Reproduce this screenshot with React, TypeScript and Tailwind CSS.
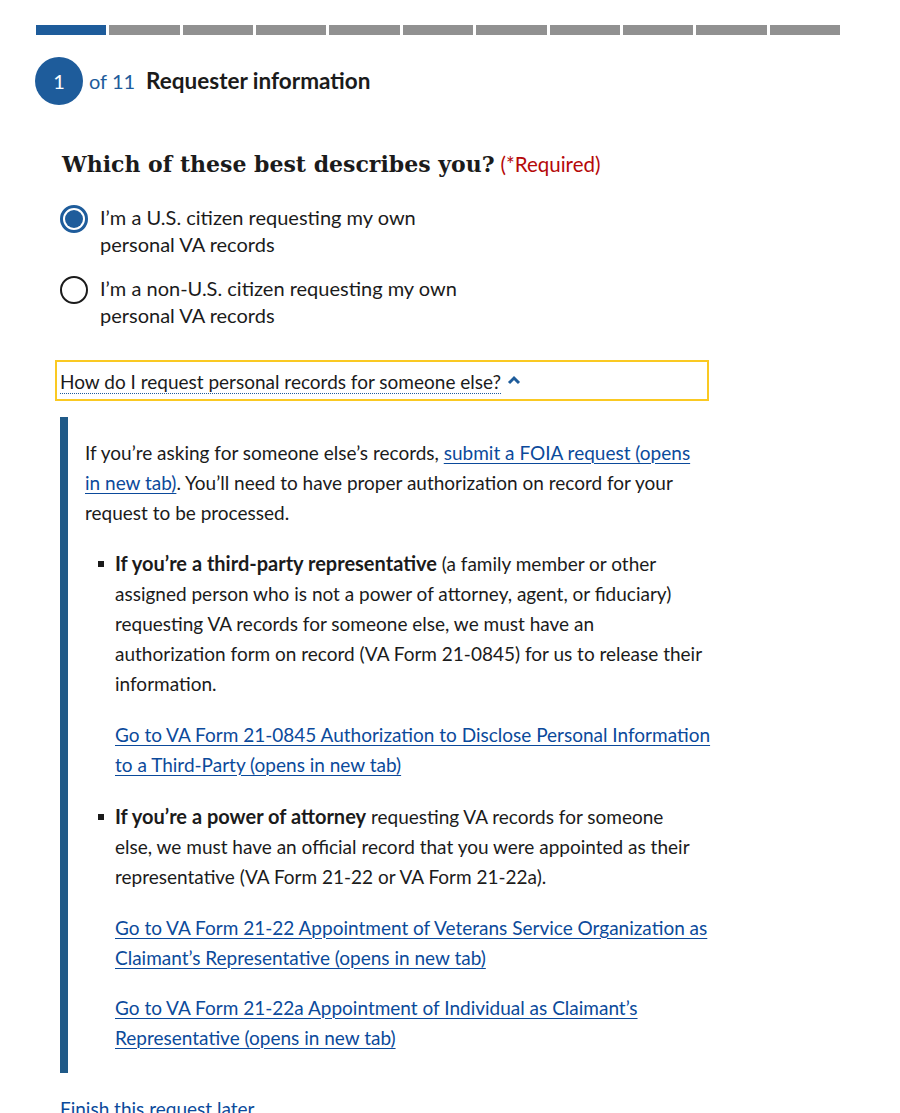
import React from "react";

const body = { fontFamily: '"Source Sans Pro", Lato, "Liberation Sans", sans-serif' };

function Progress() {
  const segs = Array.from({ length: 11 }, (_, i) => i);
  return (
    <div className="flex gap-[3px] w-[804px] ml-[36px]">
      {segs.map((i) => (
        <div
          key={i}
          className={`flex-1 h-[10px] ${i === 0 ? "bg-[#1e5c9b]" : "bg-[#919191]"}`}
        />
      ))}
    </div>
  );
}

function Radio({ checked, children }: { checked?: boolean; children: React.ReactNode }) {
  return (
    <label className="flex items-start gap-[12px]">
      <span
        className={`mt-[1px] shrink-0 w-[28px] h-[28px] rounded-full flex items-center justify-center ${
          checked ? "border-[3px] border-[#1e5c9b]" : "border-2 border-[#1b1b1b]"
        }`}
      >
        {checked && <span className="w-[18px] h-[18px] rounded-full bg-[#1e5c9b]" />}
      </span>
      <span className="text-[20px] leading-[27px] text-[#1b1b1b] w-[380px]">{children}</span>
    </label>
  );
}

function A({ children }: { children: React.ReactNode }) {
  return (
    <a href="#" className="text-[#0b4a9b] underline underline-offset-[3px] decoration-1">
      {children}
    </a>
  );
}

function Bullet() {
  return <span className="absolute -left-[17px] top-[13px] w-[6px] h-[6px] bg-[#1b1b1b]" />;
}

export default function App() {
  return (
    <div className="bg-white min-h-[1113px] pt-[25px] text-[#1b1b1b]" style={body}>
      <Progress />

      <div className="flex items-center mt-[22px] ml-[35px]">
        <div className="w-[48px] h-[48px] rounded-full bg-[#1e5c9b] text-white text-[20px] flex items-center justify-center">
          1
        </div>
        <span className="ml-[6px] text-[20px] text-[#1e5c9b]">of 11</span>
        <span className="ml-[11px] text-[22.5px] font-bold">Requester information</span>
      </div>

      <div className="ml-[60px] w-[680px]">
        <h2 className="mt-[44px] flex items-baseline gap-[6px]">
          <span
            className="text-[22px] font-bold leading-[30px] ml-[2px]"
            style={{ fontFamily: '"DejaVu Serif", "Liberation Serif", serif' }}
          >
            Which of these best describes you?
          </span>
          <span className="text-[20.5px] text-[#b50909]">(*Required)</span>
        </h2>

        <div className="mt-[24px] flex flex-col gap-[17px]">
          <Radio checked>I’m a U.S. citizen requesting my own personal VA records</Radio>
          <Radio>I’m a non-U.S. citizen requesting my own personal VA records</Radio>
        </div>

        <button className="mt-[31px] -ml-[5px] w-[654px] h-[41px] border-2 border-[#fac922] text-left pl-[3px] pt-[3px] flex items-center">
          <span className="text-[19px] border-b border-dotted border-[#1e5c9b] leading-[23px]">
            How do I request personal records for someone else?
          </span>
          <svg width="14" height="10" viewBox="0 0 14 10" className="ml-[6px] mb-[4px]">
            <path d="M2 8 L7 3 L12 8" stroke="#1e5c9b" strokeWidth="3" fill="none" />
          </svg>
        </button>

        <div className="mt-[16px] w-[650px] border-l-[8px] border-[#205a88] pl-[17px] pt-[21px] pb-[20px] text-[19px] leading-[30px] whitespace-nowrap">
          <p>
            If you’re asking for someone else’s records, <A>submit a FOIA request (opens<br />in new tab)</A>.
            You’ll need to have proper authorization on record for your
            <br />
            request to be processed.
          </p>

          <ul className="mt-[20px] pl-[30px] flex flex-col gap-[21px]">
            <li className="relative">
              <Bullet />
              <p>
                <b className="text-[20px]">If you’re a third-party representative</b> (a family member or
                other
                <br />
                assigned person who is not a power of attorney, agent, or fiduciary)
                <br />
                requesting VA records for someone else, we must have an
                <br />
                authorization form on record (VA Form 21-0845) for us to release their
                <br />
                information.
              </p>
              <p className="mt-[21px]">
                <A>
                  Go to VA Form 21-0845 Authorization to Disclose Personal Information
                  <br />
                  to a Third-Party (opens in new tab)
                </A>
              </p>
            </li>
            <li className="relative">
              <Bullet />
              <p>
                <b className="text-[20px]">If you’re a power of attorney</b> requesting VA records for
                someone
                <br />
                else, we must have an official record that you were appointed as their
                <br />
                representative (VA Form 21-22 or VA Form 21-22a).
              </p>
              <p className="mt-[21px]">
                <A>
                  Go to VA Form 21-22 Appointment of Veterans Service Organization as
                  <br />
                  Claimant’s Representative (opens in new tab)
                </A>
              </p>
              <p className="mt-[20px]">
                <A>
                  Go to VA Form 21-22a Appointment of Individual as Claimant’s
                  <br />
                  Representative (opens in new tab)
                </A>
              </p>
            </li>
          </ul>
        </div>

        <p className="mt-[21px] text-[19px] leading-[30px]">
          <A>Finish this request later</A>
        </p>
      </div>
    </div>
  );
}
